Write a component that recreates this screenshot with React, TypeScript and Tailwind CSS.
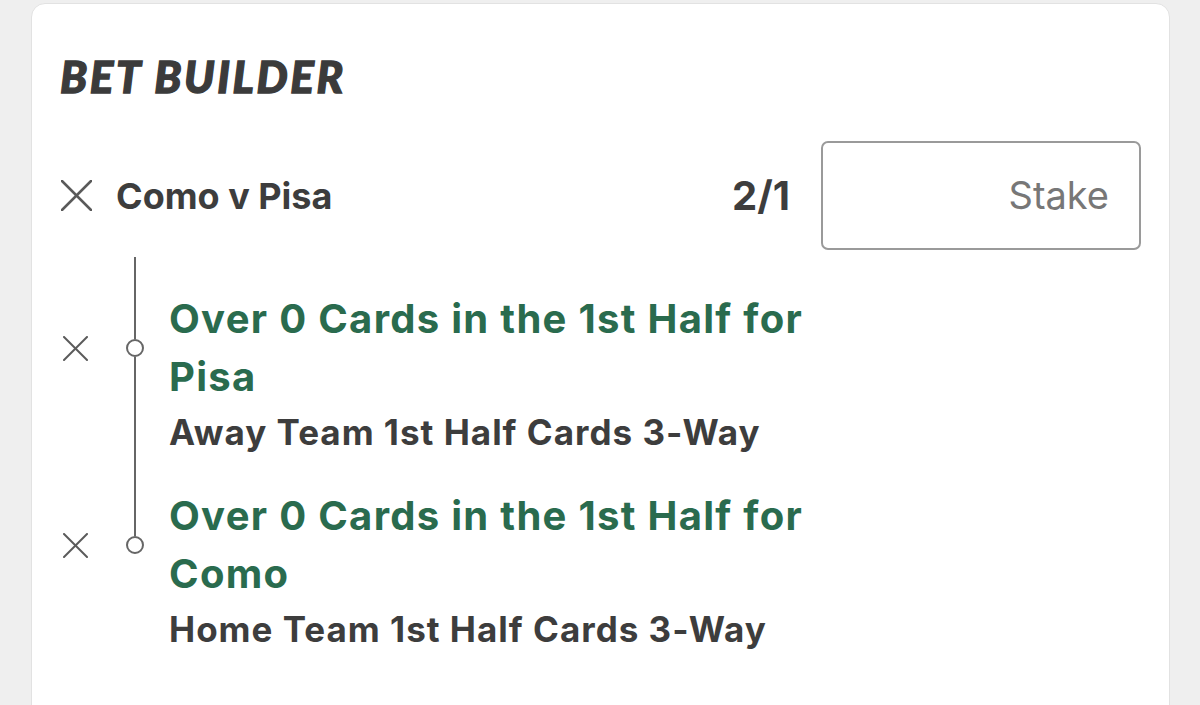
import React from "react";

const XIcon = ({ size, stroke }: { size: number; stroke: number }) => (
  <svg width={size} height={size} viewBox={`0 0 ${size} ${size}`} fill="none">
    <line x1={1} y1={1} x2={size - 1} y2={size - 1} stroke="#5a5a5a" strokeWidth={stroke} strokeLinecap="round" />
    <line x1={size - 1} y1={1} x2={1} y2={size - 1} stroke="#5a5a5a" strokeWidth={stroke} strokeLinecap="round" />
  </svg>
);

const Leg = ({ title, sub, last }: { title: string; sub: string; last?: boolean }) => (
  <div className="grid grid-cols-[30px_18px_1fr] gap-x-0">
    <div className="row-start-1 col-start-1 flex items-center justify-center pt-[33px]">
      <XIcon size={25} stroke={2} />
    </div>
    <div className="row-start-1 col-start-2 flex flex-col items-center ml-[36px] -mr-[36px]">
      <div className="w-[2px] h-[33px] bg-[#666]" />
      <div className="w-[2px] flex-1 bg-[#666]" />
      <div className="w-[18px] h-[18px] rounded-full border-2 border-[#666] bg-white" />
      <div className={`w-[2px] flex-1 ${last ? "" : "bg-[#666]"}`} />
    </div>
    <div className="row-start-1 col-start-3 pt-[33px] pl-[61px] max-w-[760px] text-[40px] leading-[58px] tracking-[1.3px] font-bold text-[#2a6b4e]">
      {title}
    </div>
    <div className="row-start-2 col-start-2 flex justify-center ml-[36px] -mr-[36px]">
      {!last && <div className="w-[2px] h-full bg-[#666]" />}
    </div>
    <div className="row-start-2 col-start-3 pl-[61px] mt-[4px] text-[35px] leading-[44px] tracking-[1px] font-bold text-[#3d3d3d]">
      {sub}
    </div>
  </div>
);

export default function App() {
  return (
    <div
      className="w-[1200px] h-[705px] overflow-hidden bg-[#efefef]"
      style={{ fontFamily: "Inter, 'Liberation Sans', sans-serif" }}
    >
      <div className="mt-[3px] ml-[31px] w-[1139px] h-[760px] rounded-[14px] border border-[#e2e2e2] bg-white pl-[28px] pr-[28px] pt-[50px]">
        <h1
          className="text-[44px] leading-[44px] text-[#3b3b3b] italic font-black tracking-[2.6px] [-webkit-text-stroke:1.3px_#3b3b3b]"
          style={{ fontFamily: "Lato, 'Liberation Sans', sans-serif" }}
        >
          BET BUILDER
        </h1>
        <div className="mt-[43px] flex items-center">
          <div className="w-[32px] flex items-center justify-center">
            <XIcon size={31} stroke={2.5} />
          </div>
          <div className="ml-[24px] text-[36px] font-bold text-[#3d3d3d] leading-none">Como v Pisa</div>
          <div className="flex-1" />
          <div className="text-[40px] font-bold text-[#3d3d3d] leading-none">2/1</div>
          <div className="ml-[31px] w-[320px] h-[109px] rounded-[7px] border-2 border-[#9a9a9a] flex items-center justify-end pr-[30px] text-[38px] text-[#777]">
            Stake
          </div>
        </div>
        <div className="mt-[7px]">
          <Leg title="Over 0 Cards in the 1st Half for Pisa" sub="Away Team 1st Half Cards 3-Way" />
          <Leg title="Over 0 Cards in the 1st Half for Como" sub="Home Team 1st Half Cards 3-Way" last />
        </div>
      </div>
    </div>
  );
}
